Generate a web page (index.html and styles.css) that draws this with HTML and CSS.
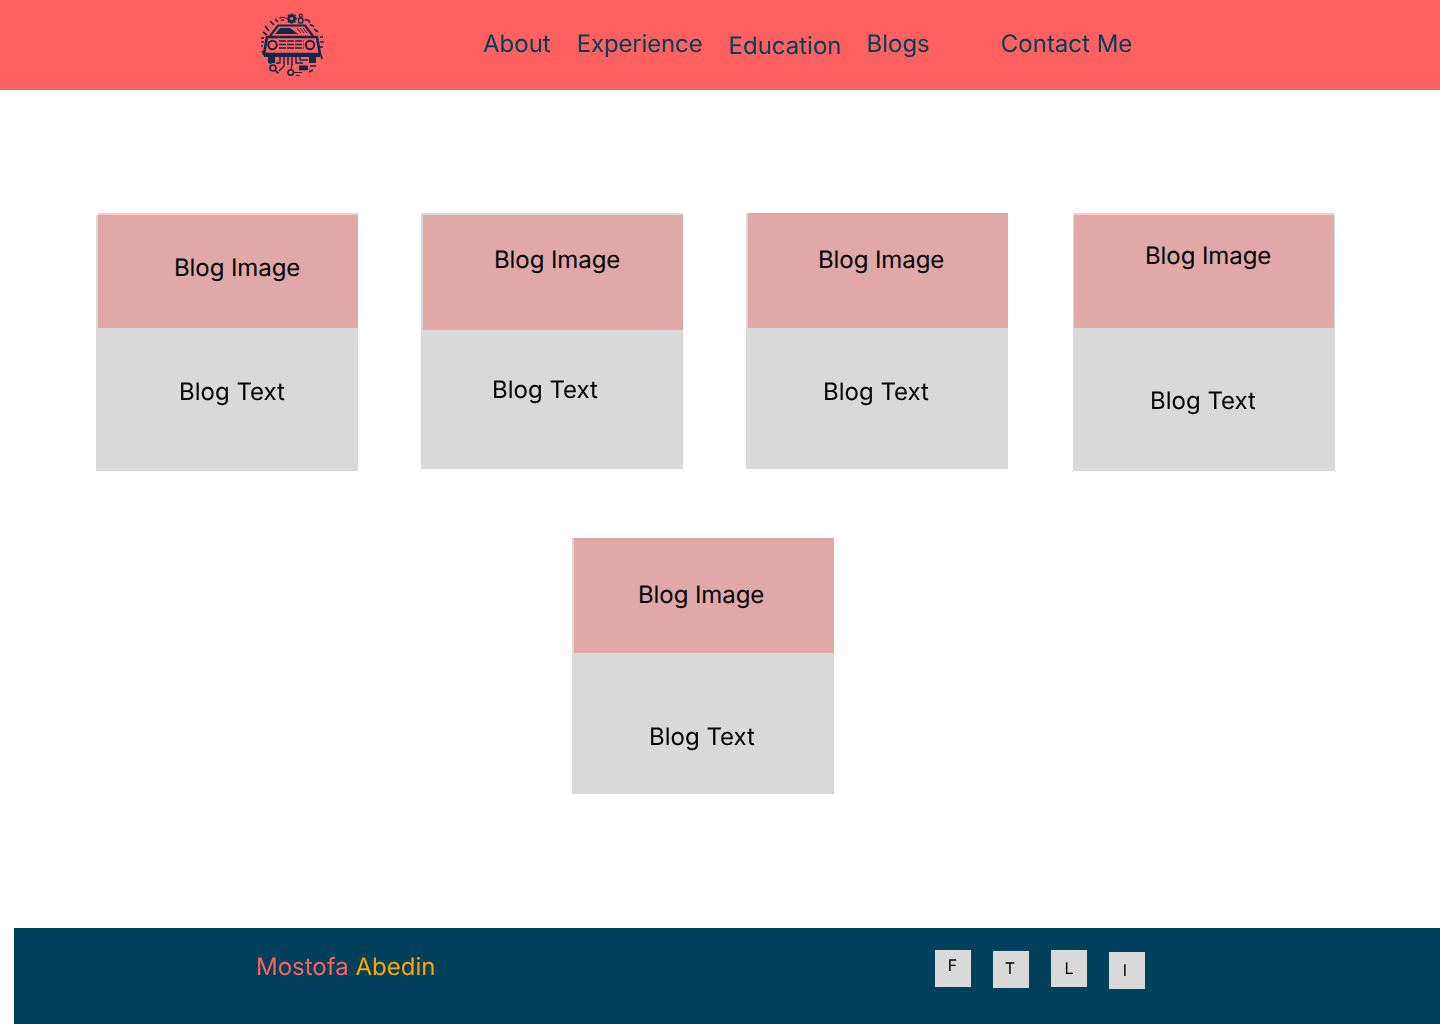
FILE: index.html
```html
<!DOCTYPE html>
<html lang="en">
<head>
<meta charset="utf-8">
<title>Blogs</title>
<link rel="stylesheet" href="styles.css">
</head>
<body>
<header class="header">
  <svg class="logo" viewBox="0 0 64 64" width="64" height="64" aria-label="Logo">
    <g fill="none" stroke="#10294a" stroke-width="1.6">
      <path d="M10 23 L18 12.5 H45 L53 23" stroke-width="2.2"/>
      <path d="M15 21 L20 15 H30 L38 21 Z" fill="#10294a" stroke="none"/>
      <path d="M40 15 L44 20 M43 15 L47 20 M37 15 L41 20" stroke-width="1"/>
      <path d="M7 24 H57 L60 41 H4 Z" stroke-width="2.6"/>
      <circle cx="12.5" cy="32" r="4.2" stroke-width="2"/>
      <circle cx="50" cy="32" r="4.2" stroke-width="2"/>
      <path d="M19 28 H44 M19 31.5 H44 M19 35 H44" stroke-width="1.6" stroke-dasharray="7 1"/>
      <path d="M4 41 H60 V44 H56 V50 H49 V44 H15 V50 H8 V44 H4 Z" fill="#10294a" stroke="none"/>
      <path d="M20 44 V50 H16 M24 44 V53 L19 58 M28 44 V52 M32 44 V52 L31 56 M36 44 V50 H43 M40 44 V47 H48" stroke-width="1.4"/>
      <circle cx="30.7" cy="59.5" r="2.8" stroke-width="1.6"/>
      <path d="M33.5 59.5 H42 M36 62.5 H40" stroke-width="1.2"/>
      <circle cx="13" cy="55" r="3" stroke-width="1.6"/>
      <path d="M15 57 L18.5 60.5 M8 47 L11 51" stroke-width="1.6"/>
      <rect x="39" y="52.5" width="9" height="4.8" fill="#10294a" stroke="none"/>
      <path d="M50 53 H56 M49 59 L53 57" stroke-width="1.4"/>
      <circle cx="31.7" cy="5.6" r="3" stroke-width="2.6"/>
      <path d="M31.7 0.4 V2 M31.7 9.2 V10.8 M26.5 5.6 H28 M35.4 5.6 H36.9 M28 1.9 L29.2 3.1 M34.2 8.1 L35.4 9.3 M35.4 1.9 L34.2 3.1 M29.2 8.1 L28 9.3" stroke-width="1.8"/>
      <rect x="38.5" y="5" width="4.4" height="5" rx="1.2" stroke-width="1.4"/>
      <circle cx="40.7" cy="2.6" r="1.5" stroke-width="1.1"/>
      <path d="M44.5 7 H48 L50 9.5 M50 11.5 L54 13.5 M54 16 L58 19" stroke-width="1.7"/>
      <path d="M19.5 5.5 Q22.5 3 25.5 5.5 M21 7.5 Q22.5 6.3 24 7.5" stroke-width="1.1"/>
      <path d="M10 8 L14 12 M15 6 L18 9 M5 13 L9 18 M3 19 L7 22 M1 25 H4 M1 29 H4 M1 33 H3 M2 38 L4 41 M60 24 H63 M60 29 H64 M60 34 H63 M61 42 L62 46" stroke-width="1.7"/>
    </g>
  </svg>
  <nav class="nav">
    <a class="nav-link">About</a>
    <a class="nav-link nav-link-tight">Experience</a>
    <a class="nav-link nav-link-low">Education</a>
    <a class="nav-link">Blogs</a>
    <a class="nav-link nav-link-contact">Contact Me</a>
  </nav>
</header>
<main class="main">
  <div class="row">
    <article class="card card-a">
      <div class="card-image">Blog Image</div>
      <div class="card-text">Blog Text</div>
    </article>
    <article class="card card-b">
      <div class="card-image">Blog Image</div>
      <div class="card-text">Blog Text</div>
    </article>
    <article class="card card-c">
      <div class="card-image">Blog Image</div>
      <div class="card-text">Blog Text</div>
    </article>
    <article class="card card-d">
      <div class="card-image">Blog Image</div>
      <div class="card-text">Blog Text</div>
    </article>
  </div>
  <div class="row row-second">
    <article class="card card-e">
      <div class="card-image">Blog Image</div>
      <div class="card-text">Blog Text</div>
    </article>
  </div>
</main>
<footer class="footer">
  <div class="brand"><span class="brand-first">Mostofa</span> <span class="brand-last">Abedin</span></div>
  <div class="socials">
    <a class="social social-f">F</a>
    <a class="social social-t">T</a>
    <a class="social social-l">L</a>
    <a class="social social-i">I</a>
  </div>
</footer>
</body>
</html>
```
FILE: styles.css
```css
* { box-sizing: border-box; }
html, body { margin: 0; padding: 0; overflow-x: hidden; }
body { font-family: Inter, "Liberation Sans", sans-serif; background: #fff; color: #000; text-rendering: geometricPrecision; }

.header {
  height: 90px;
  background: #ff6060;
  display: flex;
  align-items: flex-start;
  padding: 13px 0 0 260px;
}
.logo { flex: none; display: block; }
.nav { display: flex; margin-left: 159px; padding-top: 16px; font-size: 24px; color: #00405a; will-change: transform; }
.nav-link { display: block; line-height: 29px; margin-right: 26px; }
.nav-link-tight { letter-spacing: -0.15px; }
.nav-link-low { margin-top: 2px; margin-right: 25px; }
.nav-link-contact { margin-left: 45px; margin-right: 0; }

.main { padding-top: 123px; }
.row { display: flex; align-items: flex-start; padding-left: 96px; }
.row-second { padding-left: 572px; margin-top: 67px; }

.card {
  flex: none;
  width: 262px;
  height: 256px;
  background: #d9d9d9;
  display: flex;
  flex-direction: column;
  font-size: 24px;
  line-height: 29px;
}
.card-image {
  width: 260px;
  height: 115px;
  background: #e2a8a8;
  letter-spacing: -0.08px;
  will-change: opacity;
  opacity: 0.999;
}
.card-text { will-change: transform; }
.card-a { margin-top: 2px; }
.card-a .card-image { margin: -2px 0 0 2px; padding: 38px 0 0 76px; border-top: 2px solid #ffc8c8; }
.card-a .card-text { padding: 49px 0 0 83px; }
.card-b { margin-left: 63px; }
.card-b .card-image { margin: 2px 0 0 2px; padding: 30px 0 0 71px; }
.card-b .card-text { padding: 45px 0 0 71px; }
.card-c { margin-left: 63px; }
.card-c .card-image { margin: 0 0 0 2px; padding: 32px 0 0 70px; }
.card-c .card-text { padding: 49px 0 0 77px; }
.card-d { margin-left: 65px; margin-top: 2px; }
.card-d .card-image { margin: -2px 0 0 1px; padding: 26px 0 0 71px; border-top: 2px solid #ffc8c8; }
.card-d .card-text { padding: 58px 0 0 77px; }
.card-e .card-image { margin: 0 0 0 2px; padding: 42px 0 0 64px; }
.card-e .card-text { padding: 69px 0 0 77px; }

.footer {
  margin: 134px 0 0 14px;
  height: 96px;
  background: #00405a;
  display: flex;
  align-items: flex-start;
  padding-left: 242px;
}
.brand { font-size: 24px; line-height: 29px; margin-top: 24px; width: 679px; flex: none; will-change: transform; }
.brand-first { color: #ff6060; }
.brand-last { color: #ffa500; }
.socials { display: flex; gap: 22px; font-size: 16px; line-height: 19px; color: #000; will-change: transform; }
.social { display: block; width: 36px; height: 37px; background: #d9d9d9; text-align: center; }
.social-f { margin-top: 22px; padding: 6px 1px 0 0; }
.social-t { margin-top: 23px; padding: 8px 2px 0 0; }
.social-l { margin-top: 22px; padding: 9px 0 0 0; }
.social-i { margin-top: 24px; padding: 9px 4px 0 0; }
```
